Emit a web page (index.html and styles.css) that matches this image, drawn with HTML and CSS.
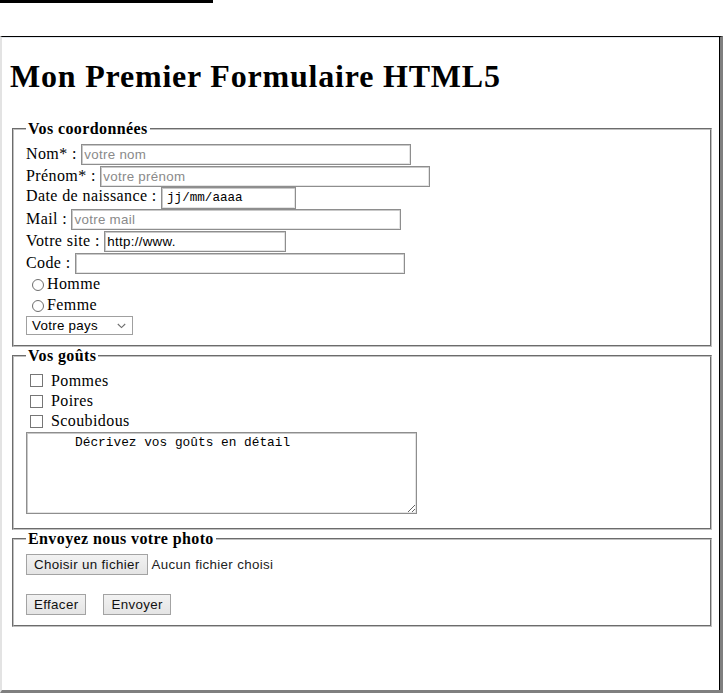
FILE: index.html
```html
<!DOCTYPE html>
<html lang="fr">
<head>
<meta charset="utf-8">
<title>Mon Premier Formulaire HTML5</title>
<link rel="stylesheet" href="styles.css">
</head>
<body>
<div class="topbar"></div>
<div class="frame">
  <h1 class="title">Mon Premier Formulaire HTML5</h1>
  <form class="form">
    <fieldset class="group group-coords">
      <legend class="legend">Vos coordonnées</legend>
      <div class="row"><label class="lbl">Nom* :&nbsp;</label><input class="field w-long" type="text" placeholder="votre nom"></div>
      <div class="row"><label class="lbl">Prénom* :&nbsp;</label><input class="field w-long" type="text" placeholder="votre prénom"></div>
      <div class="row"><label class="lbl">Date de naissance :&nbsp;</label><input class="field w-date mono" type="text" value="jj/mm/aaaa"></div>
      <div class="row"><label class="lbl">Mail :&nbsp;</label><input class="field w-long" type="text" placeholder="votre mail"></div>
      <div class="row"><label class="lbl">Votre site :&nbsp;</label><input class="field w-site" type="text" value="http://www."></div>
      <div class="row"><label class="lbl">Code :&nbsp;</label><input class="field w-long" type="text"></div>
      <div class="radio-row"><span class="radio"></span><span class="lbl">Homme</span></div>
      <div class="radio-row"><span class="radio"></span><span class="lbl">Femme</span></div>
      <div class="select-row">
        <span class="select">Votre pays
          <svg class="chev" width="9" height="6" viewBox="0 0 9 6"><path d="M0.8 1 L4.5 4.6 L8.2 1" fill="none" stroke="#6d6d6d" stroke-width="1.1"/></svg>
        </span>
      </div>
    </fieldset>
    <fieldset class="group group-gouts">
      <legend class="legend">Vos goûts</legend>
      <div class="check-row"><span class="check"></span><span class="lbl">Pommes</span></div>
      <div class="check-row"><span class="check"></span><span class="lbl">Poires</span></div>
      <div class="check-row"><span class="check"></span><span class="lbl">Scoubidous</span></div>
      <textarea class="area">      Décrivez vos goûts en détail</textarea>
    </fieldset>
    <fieldset class="group group-photo">
      <legend class="legend">Envoyez nous votre photo</legend>
      <div class="file-row"><span class="btn">Choisir un fichier</span><span class="file-text">Aucun fichier choisi</span></div>
      <div class="btn-row"><span class="btn">Effacer</span><span class="btn btn-send">Envoyer</span></div>
    </fieldset>
  </form>
</div>
</body>
</html>
```
FILE: styles.css
```css
html, body {
  margin: 0;
  padding: 0;
  background: #fff;
}
body {
  font-family: "Liberation Serif", "Times New Roman", serif;
  font-size: 16px;
  color: #000;
  letter-spacing: 0.4px;
}
.topbar {
  width: 213px;
  height: 3px;
  background: #000;
}
.frame {
  box-sizing: border-box;
  margin-top: 33px;
  width: 723px;
  height: 657px;
  border-top: 1px solid #000;
  border-left: 2px solid #e3e3e3;
  border-right: 3px solid #7f7f7f;
  border-bottom: 3px solid #7f7f7f;
  box-shadow: inset -1px 0 0 #000, inset 0 1px 0 #e3e8ee;
  padding: 0 6px 0 8px;
  overflow: hidden;
}
.title {
  font-size: 32px;
  font-weight: bold;
  line-height: 36.8px;
  letter-spacing: 0.8px;
  margin: 21.4px 0 24.8px 0;
}
.form {
  margin: 0;
}
.group {
  margin: 0 2px;
  padding: 5.6px 12px 10px 12px;
  border: 2px groove #c0c0c0;
  min-width: 0;
}
.legend {
  font-weight: bold;
  font-size: 16px;
  line-height: 18.4px;
  padding: 0 2px;
}
.lbl {
  font-size: 16px;
  line-height: 18.4px;
  white-space: pre;
}
.row {
  display: flex;
  align-items: baseline;
  height: 21.75px;
}
.field {
  box-sizing: border-box;
  height: 21px;
  margin: 0;
  padding: 1px 2px;
  font-family: "Liberation Sans", Arial, sans-serif;
  font-size: 13.33px;
  letter-spacing: 0.3px;
  color: #000;
  background: #fff;
  border: 1px solid #8e8e8e;
  box-shadow: inset 1px 1px 0 #c9c9c9, inset -1px -1px 0 #e4e4e4;
  outline: none;
}
.field::placeholder {
  color: #8a8a8a;
}
.w-long { width: 330px; }
.w-site { width: 182px; }
.w-date { width: 135px; height: 22px; }
.mono {
  font-family: "Liberation Mono", "Courier New", monospace;
  font-size: 12.6px;
  letter-spacing: 0;
  padding-left: 5px;
}
.radio-row {
  display: flex;
  align-items: center;
  height: 20.4px;
}
.radio {
  box-sizing: border-box;
  width: 12px;
  height: 12px;
  border: 1px solid #6e6e6e;
  border-radius: 50%;
  margin: 1px 3px 0 6px;
  background: #fff;
}
.select-row {
  display: flex;
  height: 19px;
  margin-top: 0.5px;
}
.select {
  position: relative;
  box-sizing: border-box;
  width: 107px;
  height: 19px;
  padding: 1px 0 0 5px;
  font-family: "Liberation Sans", Arial, sans-serif;
  font-size: 13.33px;
  letter-spacing: 0.3px;
  line-height: 15px;
  border: 1px solid #a0a0a0;
  background: #fff;
}
.chev {
  position: absolute;
  right: 6px;
  top: 6px;
}
.check-row {
  display: flex;
  align-items: center;
  height: 20.3px;
}
.check {
  box-sizing: border-box;
  width: 13px;
  height: 13px;
  border: 1px solid #767676;
  margin: 0 8px 0 4px;
  background: #fff;
}
.area {
  display: block;
  box-sizing: border-box;
  width: 391px;
  height: 82px;
  margin: 0 0 4px 0;
  padding: 2px 2px;
  font-family: "Liberation Mono", "DejaVu Sans Mono", monospace;
  font-size: 12.8px;
  line-height: 15px;
  letter-spacing: 0;
  color: #000;
  border: 1px solid #8e8e8e;
  box-shadow: inset 1px 1px 0 #c9c9c9, inset -1px -1px 0 #e4e4e4;
  resize: both;
  white-space: pre;
  overflow: hidden;
}
.file-row {
  display: flex;
  align-items: center;
  height: 21px;
}
.btn-row {
  display: flex;
  align-items: center;
  height: 21px;
  margin-top: 19px;
}
.btn {
  box-sizing: border-box;
  height: 21px;
  padding: 0 7px;
  font-family: "Liberation Sans", Arial, sans-serif;
  font-size: 13.33px;
  letter-spacing: 0.35px;
  line-height: 19px;
  color: #111;
  background: linear-gradient(#f2f2f2, #e4e4e4);
  border: 1px solid #a3a3a3;
  white-space: nowrap;
}
.btn-send {
  margin-left: 17px;
}
.file-text {
  margin-left: 4px;
  font-family: "Liberation Sans", Arial, sans-serif;
  font-size: 13.33px;
  letter-spacing: 0.35px;
  color: #222;
}
```
